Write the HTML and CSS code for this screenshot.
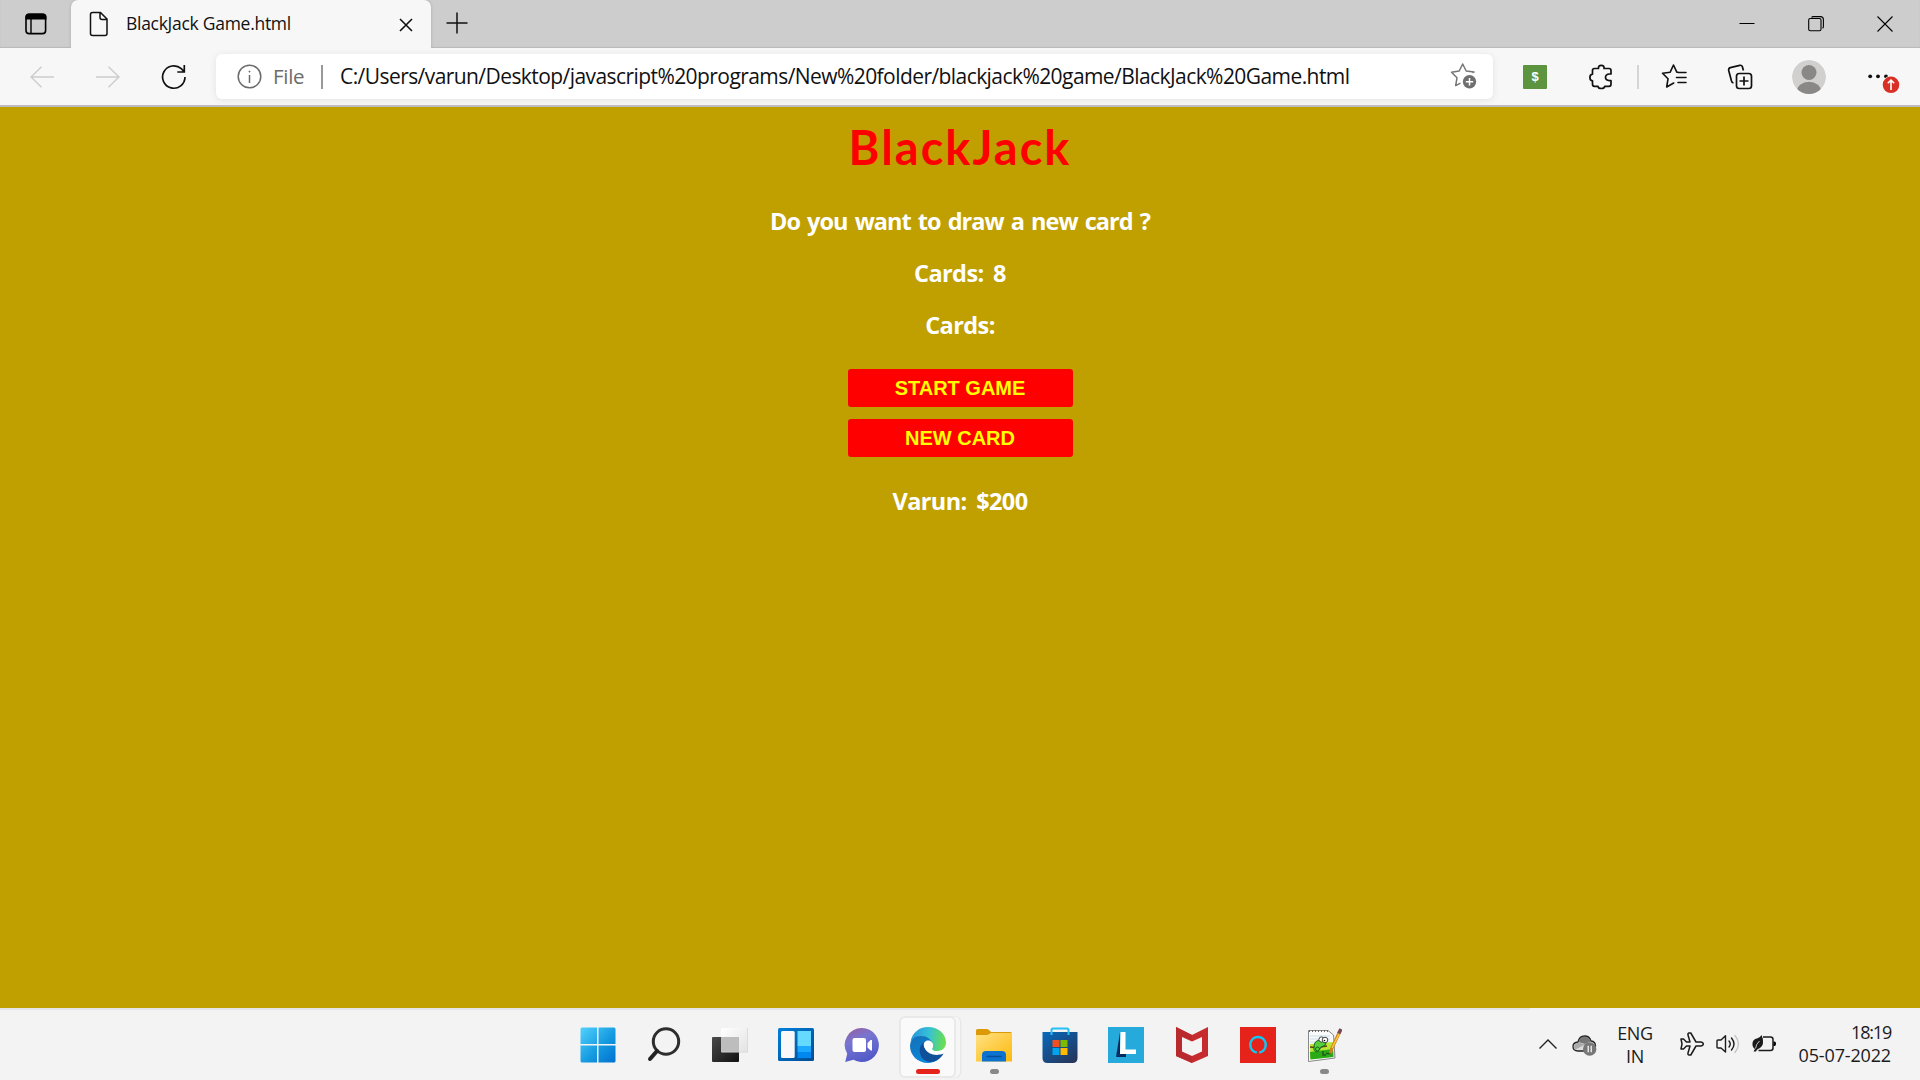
FILE: index.html
```html
<!DOCTYPE html>
<html lang="en">
<head>
<meta charset="utf-8">
<title>BlackJack Game.html</title>
<link rel="stylesheet" href="styles.css">
</head>
<body>
<div class="screen">
  <header class="tabstrip">
    <div class="tab-actions">
      <svg width="22" height="22" viewBox="0 0 22 22"><rect x="1" y="1.2" width="19.6" height="19.4" rx="3.2" fill="none" stroke="#000" stroke-width="1.6"/><path d="M.5 6.5V4Q.5.5 4 .5h14Q21.5.5 21.5 4v2.500z"/><path d="M6 6v14" stroke="#000" stroke-width="1.4"/></svg>
    </div>
    <div class="tab">
      <svg class="tab-file" width="20" height="26" viewBox="0 0 20 26" fill="none" stroke="#111" stroke-width="1.5" stroke-linejoin="round"><path d="M3.500 1.500h8l6.500 6.500v14.500q0 2-2 2h-12.500q-2 0-2-2v-19q0-2 2-2zM11 1.500v5q0 2 2 2h5"/></svg>
      <span class="tab-title">BlackJack Game.html</span>
      <svg class="tab-close" width="14" height="14" viewBox="0 0 14 14" stroke="#111" stroke-width="1.6"><path d="M1 1l12 12M13 1L1 13"/></svg>
    </div>
    <svg class="new-tab" width="22" height="22" viewBox="0 0 22 22" stroke="#111" stroke-width="1.5"><path d="M11 .5v21M.5 11h21"/></svg>
    <div class="window-controls">
      <svg width="16" height="16" viewBox="0 0 16 16"><path d="M.5 7.500h15" stroke="#000"/></svg>
      <svg width="16" height="16" viewBox="0 0 16 16" fill="none" stroke="#000" stroke-width="1.1"><rect x=".7" y="2.500" width="12.300" height="12.300" rx="1.500"/><path d="M3.500 1.500q.6-.9 1.700-.9h7.200q3 0 3 3v6.800q0 1.300-.9 1.900"/></svg>
      <svg width="16" height="16" viewBox="0 0 16 16" stroke="#000" stroke-width="1.100"><path d="M.5.5l15 15M15.500.5l-15 15"/></svg>
    </div>
  </header>

  <nav class="toolbar">
    <div class="nav-buttons">
      <span class="nav-button"><svg width="24" height="22" viewBox="0 0 24 22" fill="none" stroke="#cdcdcd" stroke-width="1.500"><path d="M24 11H1M11.500.8L1 11l10.500 10.200"/></svg></span>
      <span class="nav-button"><svg width="24" height="22" viewBox="0 0 24 22" fill="none" stroke="#cdcdcd" stroke-width="1.500"><path d="M0 11h23M12.500.8L23 11 12.500 21.200"/></svg></span>
      <span class="nav-button"><svg width="26" height="26" viewBox="0 0 26 26" fill="none" stroke="#111" stroke-width="1.700"><path d="M24 13A11.200 11.200 0 1 1 20.300 4.700L23 7.500M23.300 1v7h-7"/></svg></span>
    </div>
    <div class="address">
      <svg width="25" height="25" viewBox="0 0 25 25" fill="none" stroke="#6b6b6b" stroke-width="1.500"><circle cx="12.500" cy="12.500" r="11.300"/><path d="M12.500 11v8"/><circle cx="12.500" cy="7.600" r=".6" fill="#6b6b6b" stroke-width=".8"/></svg>
      <span class="scheme">File</span>
      <span class="address-rule"></span>
      <span class="url">C:/Users/varun/Desktop/javascript%20programs/New%20folder/blackjack%20game/BlackJack%20Game.html</span>
      <svg class="add-favorite" width="27" height="27" viewBox="0 0 27 27"><path d="M22 9.500l2-.4-7.800-1.100L12.700 1 9.200 8 1.500 9.200 7 14.700 5.700 22.600l4.800-2.400" fill="none" stroke="#757575" stroke-width="1.500" stroke-linejoin="round"/><circle cx="19.500" cy="18.700" r="6.700" fill="#6f6f6f"/><path d="M19.500 15v7.400M15.800 18.700h7.400" stroke="#fff" stroke-width="1.500"/></svg>
    </div>
    <div class="extensions">
      <span class="nav-button"><span class="dollar-extension">$</span></span>
      <span class="nav-button"><svg width="24" height="26" viewBox="0 0 24 26" fill="none" stroke="#111" stroke-width="1.700" stroke-linejoin="round"><path d="M5.500 4.500H9.500Q9.200 1.300 12.300 1.300T15 4.500h5q2 0 2 2v3.500h-1.500q-4 .2-4 3.300t4 3.300H22v3.700q0 2-2 2h-4.300Q15.400 24.500 12.300 24.500T9 22.300H5.500q-2 0-2-2v-3.500Q.9 16.500.9 13.500t2.600-3.300V6.500q0-2 2-2z"/></svg></span>
    </div>
    <span class="toolbar-rule"></span>
    <div class="browser-actions">
      <span class="nav-button"><svg width="26" height="26" viewBox="0 0 26 26" fill="none" stroke="#111" stroke-width="1.600" stroke-linejoin="round" stroke-linecap="round"><path d="M17 8.300l-1.200-.2L12.500 1 9.200 8.200 1.500 9.200 7 14.800 5.700 23l7-4M17 8.500h8M15.500 13.500H25M17 18.500h8"/></svg></span>
      <span class="nav-button"><svg width="26" height="26" viewBox="0 0 26 26" fill="none" stroke="#111" stroke-width="1.700" stroke-linejoin="round"><rect x="9.500" y="9.500" width="15" height="15" rx="2.700"/><path d="M17 12.500v9M12.500 17h9M6.500 19Q5 18.600 4.500 17L1.700 6.500Q1.300 4.300 3.300 3.600L12.800 1.300q2-.3 2.600 1.400L16.400 6.500"/></svg></span>
    </div>
    <svg class="avatar" width="34" height="34" viewBox="0 0 34 34"><defs><clipPath id="avatar-clip"><circle cx="17" cy="17" r="17"/></clipPath></defs><g clip-path="url(#avatar-clip)"><circle cx="17" cy="17" r="17" fill="#d2d0ce"/><circle cx="17" cy="12.500" r="7.500" fill="#8a8886"/><ellipse cx="17" cy="31" rx="12" ry="9.300" fill="#8a8886"/></g></svg>
    <svg class="more" width="32" height="24" viewBox="0 0 32 24"><g fill="#111"><circle cx="2.200" cy="6.300" r="1.900"/><circle cx="10" cy="6.300" r="1.900"/><circle cx="18" cy="6.300" r="1.900"/></g><circle cx="23" cy="14.800" r="9" fill="#f7f7f7"/><circle cx="23" cy="14.800" r="8.300" fill="#d93025"/><path d="M23 20v-9.500M19.800 13.300l3.200-3.100 3.200 3.100" fill="none" stroke="#fff" stroke-width="1.600"/></svg>
  </nav>

  <main class="page">
    <h1 class="title">BlackJack</h1>
    <p class="message question">Do you want to draw a new card ?</p>
    <p class="message cards">Cards: 8</p>
    <p class="message cards">Cards:</p>
    <button class="game-button">START GAME</button>
    <button class="game-button">NEW CARD</button>
    <p class="message player">Varun: $200</p>
  </main>

  <footer class="taskbar">
    <div class="taskbar-side"></div>
    <div class="apps">
      <span class="app"><svg width="36" height="36" viewBox="0 0 36 36"><defs><linearGradient id="win" gradientUnits="userSpaceOnUse" x1="0" y1="0" x2="36" y2="36"><stop offset="0" stop-color="#55d3ff"/><stop offset=".55" stop-color="#159be0"/><stop offset="1" stop-color="#0070cf"/></linearGradient></defs><path d="M2 .5h15V17H.5V2Q.5.5 2 .5zM18.500.5H34q1.500 0 1.500 1.500v15h-17zM.5 18.500H17v17H2q-1.500 0-1.500-1.500zM18.500 18.500h17V34q0 1.500-1.500 1.500H18.500z" fill="url(#win)"/></svg></span>
      <span class="app"><svg width="34" height="36" viewBox="0 0 34 36" fill="none"><circle cx="19" cy="14.500" r="12.700" stroke="#2d2d2d" stroke-width="3"/><path d="M10 24L3 32" stroke="#222" stroke-width="4" stroke-linecap="round"/></svg></span>
      <span class="app"><svg width="36" height="36" viewBox="0 0 36 36"><defs><linearGradient id="dark" x2="1" y2="1"><stop stop-color="#4a4a4a"/><stop offset="1" stop-color="#111"/></linearGradient><linearGradient id="pane" x2="1" y2="1"><stop stop-color="#fff"/><stop offset="1" stop-color="#e3e3e3"/></linearGradient></defs><rect y="10" width="27" height="25" rx="1" fill="url(#dark)"/><rect x="9" y="1" width="27" height="24.500" rx="1" fill="#d5d5d5"/><rect x="9" y="1" width="26.300" height="23.800" rx="1" fill="url(#pane)"/><path d="M9 10h18v14.800H9z" fill="#bdbdbd"/></svg></span>
      <span class="app"><svg width="36" height="34" viewBox="0 0 36 34"><defs><linearGradient id="board" x2="1" y2="1"><stop stop-color="#0080dc"/><stop offset="1" stop-color="#004b91"/></linearGradient></defs><rect width="36" height="33" rx="1.500" fill="url(#board)"/><rect x="3" y="3" width="13.700" height="27" rx="1.500" fill="#f8f8f8"/><path d="M19.500 3H33v15H19.500z" fill="#66d9ff"/><path d="M19.500 18H33v6H19.500z" fill="#1ba9ff"/><path d="M19.500 24H33v6H19.500z" fill="#0088ee"/></svg></span>
      <span class="app"><svg width="36" height="36" viewBox="0 0 36 36"><defs><linearGradient id="chat" x1=".2" y1="0" x2=".6" y2="1"><stop stop-color="#9460a5"/><stop offset=".35" stop-color="#7776d0"/><stop offset="1" stop-color="#5058c8"/></linearGradient></defs><path d="M18 1a17 17 0 1 1-8.500 31.800L1.200 35l2-8.300A17 17 0 0 1 18 1z" fill="url(#chat)"/><rect x="8.500" y="11" width="13.500" height="14" rx="2" fill="#fff"/><path d="M23.500 16l3.200-3h1.300v10.500h-1.300l-3.200-3z" fill="#fff"/></svg></span>
      <span class="app app-active"><svg width="36" height="36" viewBox="0 0 36 36"><defs><linearGradient id="edge-top" x1="0" y1=".4" x2="1" y2=".5"><stop stop-color="#2793df"/><stop offset=".5" stop-color="#36c1d4"/><stop offset="1" stop-color="#6be04a"/></linearGradient><linearGradient id="edge-left" x2=".5" y2="1"><stop stop-color="#1470b5"/><stop offset="1" stop-color="#0b87dc"/></linearGradient></defs><path d="M.5 15C2 6 9 0 18 0c11 0 18 7.500 18 15.500 0 6-4.500 8.500-9.500 8.500-3.500 0-5.500-1-4-3 2-4-1-8-5.500-9C9.500 9.500 3 11 .5 15z" fill="url(#edge-top)"/><path d="M0 19C.5 12 5 9 11 9c6 0 10.500 3.500 11.500 8-6-6-11 1-8 8 2 6 8 9 13.500 7.500C25 34.800 21.500 36 18 36 7.500 36 0 28 0 19z" fill="url(#edge-left)"/><path d="M16 14c-6 3-8 9-5 15 3.500 6.500 11 7.500 16.500 4 3-2 5-4.200 6-6.500-9 4-19-1-19-7.500 0-2 .5-3.600 1.500-5z" fill="#104f99"/><path d="M18 13.500c-3 0-4.500 2.500-4.200 5 .7 6 10.500 10.800 19.700 7.500l1-2.500c-7 2-12.500 1-12.500-1.500 0-1 .8-1.700.8-3.500 0-3-2-5-4.800-5z" fill="#fff"/></svg><span class="indicator indicator-active"></span></span>
      <span class="app"><svg width="36" height="36" viewBox="0 0 36 36"><defs><linearGradient id="folder" x2="1" y2="1"><stop stop-color="#ffe184"/><stop offset="1" stop-color="#fdb90b"/></linearGradient></defs><path d="M0 3.500Q0 2 1.500 2h9Q12 2 13 3l2 2h19.500Q36 5 36 6.500V14H0z" fill="#dc9a08"/><path d="M0 8h10.500q1.500 0 2.500-.8L15 6h21v28.500H0z" fill="url(#folder)"/><path d="M6 34.500V28q0-4 4-4h16q4 0 4 4v6.500z" fill="#0b73cf"/><path d="M10.500 29.500h15" stroke="#074d97" stroke-width="1.500"/></svg><span class="indicator"></span></span>
      <span class="app"><svg width="36" height="36" viewBox="0 0 36 36"><defs><linearGradient id="store" x2=".8" y2="1"><stop stop-color="#0669bd"/><stop offset="1" stop-color="#25375d"/></linearGradient></defs><path d="M.5 5h35v26q0 5-5 5h-25q-5 0-5-5z" fill="url(#store)"/><path d="M9.500 8V3q0-1.500 1.500-1.500h14q1.500 0 1.500 1.500v5" fill="none" stroke="#25c0f5" stroke-width="2"/><path d="M10.500 13h7v7h-7z" fill="#f25022"/><path d="M18.500 13h7v7h-7z" fill="#7fba00"/><path d="M10.500 21h7v7h-7z" fill="#00a4ef"/><path d="M18.500 21h7v7h-7z" fill="#ffb900"/></svg></span>
      <span class="app"><svg width="36" height="36" viewBox="0 0 36 36"><rect width="36" height="36" fill="#25aadb"/><path d="M12 5.500V27l-4 3z" fill="#072a5e"/><path d="M8 30l4-3h6v3z" fill="#072a5e"/><path d="M12.500 5h5v17.500H28V27H12z" fill="#fff"/></svg></span>
      <span class="app"><svg width="36" height="36" viewBox="0 0 36 36"><path d="M2 0l16 8 16-8v29l-16 7-16-7z" fill="#c62b2e"/><path d="M2 0l16 8v5.500L8 9v16.500L18 30v6L2 29z" fill="#b92a2e"/><path d="M8 10l10 4.500L28 10v14.500L18 29 8 24.500z" fill="#f3f3f3"/></svg></span>
      <span class="app"><svg width="36" height="36" viewBox="0 0 36 36"><rect width="36" height="36" fill="#e5231b"/><path d="M16.800 25.500a7.800 7.800 0 1 1 2.400 0" fill="none" stroke="#10c6f2" stroke-width="2.300"/></svg></span>
      <span class="app"><svg width="36" height="36" viewBox="0 0 36 36"><path d="M2.500 3.500H22l5.500 4.500 1.500 23-26.500 3.500z" fill="#fafafa" stroke="#888"/><path d="M3 4h19" stroke="#666" stroke-width="2" stroke-dasharray="1 2"/><path d="M4 9h20M4 12h20M4 15h20" stroke="#c7deee"/><path d="M4 17l23-2 .5 14.500L4.500 32z" fill="#b9e632"/><path d="M4 25l23-3 .5 8L4.500 32.500z" fill="#2aaa15"/><path d="M4 20q7 1 17-1" stroke="#654019" stroke-width="1.500" fill="none"/><path d="M8 20q0-7 7-7l5 3q0 3-5 4-1 3-4 5-4-1-3-5z" fill="#55cf3c" stroke="#17651b"/><circle cx="11.500" cy="22" r="2" fill="none" stroke="#17651b"/><circle cx="15.500" cy="12.500" r="2.600" fill="#fff" stroke="#444"/><circle cx="19" cy="13" r="2.800" fill="#fff" stroke="#444"/><circle cx="18.500" cy="13.500" r=".8"/><path d="M17 24v4h3M20 26.500h5" stroke="#235820" stroke-width="1.500" fill="none"/><path d="M24.500 26.500l1-4.500L34 4" stroke="#cc851c" stroke-width="3.200" fill="none"/><path d="M26 21L33.500 6" stroke="#ffc83b" stroke-width="1.500"/><path d="M32.700 6.500L35 2" stroke="#744a55" stroke-width="3.500"/></svg><span class="indicator"></span></span>
    </div>
    <div class="taskbar-side tray">
      <svg class="chevron" width="18" height="10" viewBox="0 0 18 10" fill="none" stroke="#222" stroke-width="1.400"><path d="M.5 9.500L9 1l8.500 8.500"/></svg>
      <svg class="cloud" width="25" height="22" viewBox="0 0 25 22"><path d="M6 17Q1 17 1 12.500 1 8.500 6 8 7.500 2 12.500 2q5 0 6.500 5 4.500.5 4.500 5 0 5-5 5z" fill="#dcdcdc" stroke="#222" stroke-width="1.300"/><path d="M6.500 8Q8 2.700 12.500 2.700q4.500 0 6 4.800l-5.500 2.500z" fill="#777"/><path d="M2 14Q2 8.500 7.500 8.700L13 10.500 3.500 15.500z" fill="#aaa"/><circle cx="17.700" cy="15" r="6.700" fill="#777"/><path d="M16.200 11.800v6.500M19.200 11.800v6.500" stroke="#fff" stroke-width="1.200"/></svg>
      <div class="language"><span>ENG</span><span>IN</span></div>
      <svg class="plane" width="24" height="24" viewBox="0 0 24 24" fill="none" stroke="#1b1b1b" stroke-width="1.500" stroke-linejoin="round"><path d="M1 7h2.500l3 3H10L8 3q-.3-2 1-2h1.800L16 10h5q2.300.2 2.300 2T21 14h-5l-5.200 9H9q-1.300 0-1-2l2-7H6.500l-3 3H1l1-5z"/></svg>
      <svg class="speaker" width="24" height="20" viewBox="0 0 24 20" fill="none" stroke="#1b1b1b" stroke-width="1.400" stroke-linejoin="round" stroke-linecap="round"><path d="M1 6.800Q1 6 2 6h3l4.500-4.300V18L5 14H2q-1 0-1-1zM13 7q2.500 3 0 6M15.500 4q5 6 0 12"/><path d="M19 1.500q7 8.500 0 17" stroke="#c5c5c5"/></svg>
      <svg class="battery" width="25" height="18" viewBox="0 0 25 18"><path d="M11 2h7.500q2.500 0 2.500 2.500v8.500q0 2.500-2.500 2.500H6.500" fill="none" stroke="#1b1b1b" stroke-width="1.500"/><path d="M21.500 6.500h1q1.500 0 1.500 2.300t-1.500 2.300h-1z"/><path d="M9.500 0Q11.500 4 11 8t-5 6q-1 0-2 2.500H1.500L3 14Q0 12 .5 8 1 4 5 3.500 8 3 9.500 0z" fill="#1b1b1b"/><path d="M3.500 13.500Q4 9 7.500 6" fill="none" stroke="#eee" stroke-width=".8"/></svg>
      <div class="clock"><span class="time">18:19</span><span>05-07-2022</span></div>
    </div>
  </footer>
</div>
</body>
</html>
```
FILE: styles.css
```css
* { box-sizing: border-box; }
body { margin: 0; font-family: "Open Sans", "Noto Sans", sans-serif; }
svg { display: block; flex: none; }
.screen { display: flex; flex-direction: column; width: 1920px; height: 1080px; overflow: hidden; }

.tabstrip { display: flex; height: 48px; background: #cdcdcd; box-shadow: inset 0 -1px 1px #b8b8b8; }
.tab-actions { width: 71px; height: 48px; padding: 13px 0 0 25px; border-radius: 0 0 5px 0; }
.tab { display: flex; align-items: center; width: 360px; height: 48px; padding: 0 18px 0 18px; background: #f7f7f7; border-radius: 7px 7px 0 0; box-shadow: 0 0 3px #aaa; clip-path: inset(0 -3px 0 -3px); }
.tab-title { margin: -2px 0 0 17px; font-size: 17.5px; letter-spacing: -.28px; color: #111; white-space: nowrap; }
.tab-close { margin: 2px 0 0 auto; }
.new-tab { margin: 12px 0 0 15px; }
.window-controls { display: flex; gap: 53px; margin: 16px 27px 0 auto; }

.toolbar { display: flex; align-items: center; height: 59px; padding: 0 20px 0 9px; background: #f7f7f7; border-bottom: 2px solid #bcbcc0; }
.nav-buttons, .extensions, .browser-actions { display: flex; }
.nav-button { display: flex; width: 66px; height: 45px; align-items: center; justify-content: center; }
.address { display: flex; align-items: center; width: 1277px; height: 45px; margin-left: 9px; padding: 0 16px 0 21px; border-radius: 6px; background: #fff; box-shadow: 0 1px 7px #e2e2e2; }
.scheme { margin: -2px 0 0 11px; width: 33px; font-size: 20.5px; letter-spacing: -.3px; color: #6b6b6b; }
.address-rule { width: 2px; height: 24px; margin-left: 15px; background: #999; }
.url { margin: -2px 0 0 17px; font-size: 21px; letter-spacing: -.57px; color: #111; white-space: nowrap; }
.add-favorite { margin-left: auto; }
.extensions { margin-left: 9px; }
.dollar-extension { width: 24px; height: 24px; border-radius: 1px; background: #5c943f; color: #fff; font: bold 13px/24px "Liberation Sans", sans-serif; text-align: center; }
.toolbar-rule { width: 2px; height: 24px; margin-left: 3px; background: #d5d5d5; }
.browser-actions { margin-left: 2px; }
.avatar { margin-left: 19px; }
.more { margin-left: auto; margin-top: 10px; }

.page { display: flex; flex-direction: column; align-items: center; height: 901px; padding-top: 12px; background: #c0a000; color: #fff; }
.title { margin: 0; font-family: Lato, sans-serif; font-size: 47px; line-height: 56px; font-weight: 700; letter-spacing: 2px; color: #f00; }
.message { margin: 32px 0 0; font-size: 23.5px; line-height: 28px; font-weight: 700; letter-spacing: -.6px; word-spacing: 4px; white-space: pre; }
.question { letter-spacing: -.98px; word-spacing: 2px; }
.cards { margin-top: 24px; }
.game-button { width: 225px; height: 38px; margin: 30px 0 0; padding: 0; border: 0; border-radius: 3px; background: #f00; color: #ff0; font: bold 20px/38px "Liberation Sans", sans-serif; }
.game-button + .game-button { margin-top: 12px; }
.player { margin-top: 30px; }

.taskbar { display: flex; height: 72px; background: #f3f3f3; box-shadow: inset 0 2px #e5e5e7; }
.taskbar-side { width: 564px; height: 72px; }
.apps { display: flex; padding-left: 1px; margin-right: -1px; }
.app { position: relative; display: flex; width: 66px; height: 74px; align-items: center; justify-content: center; }
.app:first-child svg { margin-left: -1px; }
.app-active::before { content: ""; position: absolute; left: 4px; top: 8px; width: 53px; height: 58px; border: 2px solid #e9e9e9; border-radius: 6px; background: #fafafa; box-shadow: 5px 0 0 -1px #f6f6f6, 6px 0 0 -.5px #e8e8e8; }
.app svg { position: relative; }
.indicator { position: absolute; left: 29px; top: 61px; width: 9px; height: 5px; border-radius: 3px; background: #888; }
.indicator-active { left: 21px; width: 24px; background: #e5231b; }
.tray { display: flex; align-items: center; padding: 0 29px 0 183px; background: linear-gradient(#f3f3f3, #f3f3f3) 174px 0 / 390px 2px no-repeat; color: #1b1b1b; font-size: 18px; line-height: 23px; }
.cloud { margin: 2px 0 0 15px; }
.language { display: flex; flex-direction: column; align-items: center; width: 46px; margin: 1px 0 0 15px; letter-spacing: -.4px; }
.plane { margin-left: 22px; }
.speaker { margin-left: 12px; }
.battery { margin-left: 12px; }
.clock { display: flex; flex-direction: column; align-items: flex-end; margin-left: auto; letter-spacing: -.15px; }
.time { letter-spacing: -1.2px; }
```
